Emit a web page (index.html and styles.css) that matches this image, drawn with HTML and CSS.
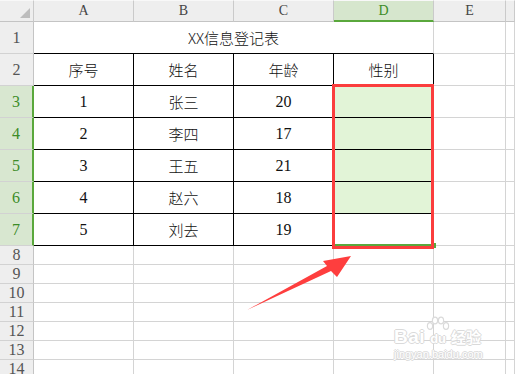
FILE: index.html
```html
<!DOCTYPE html>
<html>
<head>
<meta charset="utf-8">
<link rel="stylesheet" href="styles.css">
</head>
<body>
<div class="sheet">
  <div class="cell hd corner"><svg width="10" height="10" viewBox="0 0 10 10"><polygon points="10,0 10,10 0,10" fill="#bdbdbd"/></svg></div>
  <div class="cell hd">A</div>
  <div class="cell hd">B</div>
  <div class="cell hd">C</div>
  <div class="cell hd hd-sel">D</div>
  <div class="cell hd">E</div>
  <div class="cell hd"></div>

  <div class="cell rn">1</div>
  <div class="cell title zh">XX信息登记表</div>
  <div class="cell"></div>
  <div class="cell"></div>

  <div class="cell rn">2</div>
  <div class="cell tb zh">序号</div>
  <div class="cell tb zh">姓名</div>
  <div class="cell tb zh">年龄</div>
  <div class="cell tb zh">性别</div>
  <div class="cell"></div>
  <div class="cell"></div>

  <div class="cell rn rn-sel">3</div>
  <div class="cell tb">1</div>
  <div class="cell tb zh">张三</div>
  <div class="cell tb">20</div>
  <div class="cell tb fill"></div>
  <div class="cell"></div>
  <div class="cell"></div>

  <div class="cell rn rn-sel">4</div>
  <div class="cell tb">2</div>
  <div class="cell tb zh">李四</div>
  <div class="cell tb">17</div>
  <div class="cell tb fill"></div>
  <div class="cell"></div>
  <div class="cell"></div>

  <div class="cell rn rn-sel">5</div>
  <div class="cell tb">3</div>
  <div class="cell tb zh">王五</div>
  <div class="cell tb">21</div>
  <div class="cell tb fill"></div>
  <div class="cell"></div>
  <div class="cell"></div>

  <div class="cell rn rn-sel">6</div>
  <div class="cell tb">4</div>
  <div class="cell tb zh">赵六</div>
  <div class="cell tb">18</div>
  <div class="cell tb fill"></div>
  <div class="cell"></div>
  <div class="cell"></div>

  <div class="cell rn rn-sel">7</div>
  <div class="cell tb">5</div>
  <div class="cell tb zh">刘去</div>
  <div class="cell tb">19</div>
  <div class="cell tb active"></div>
  <div class="cell"></div>
  <div class="cell"></div>

  <div class="cell rn">8</div>
  <div class="cell"></div><div class="cell"></div><div class="cell"></div><div class="cell"></div><div class="cell"></div><div class="cell"></div>
  <div class="cell rn">9</div>
  <div class="cell"></div><div class="cell"></div><div class="cell"></div><div class="cell"></div><div class="cell"></div><div class="cell"></div>
  <div class="cell rn">10</div>
  <div class="cell"></div><div class="cell"></div><div class="cell"></div><div class="cell"></div><div class="cell"></div><div class="cell"></div>
  <div class="cell rn">11</div>
  <div class="cell"></div><div class="cell"></div><div class="cell"></div><div class="cell"></div><div class="cell"></div><div class="cell"></div>
  <div class="cell rn">12</div>
  <div class="cell"></div><div class="cell"></div><div class="cell"></div><div class="cell"></div><div class="cell"></div><div class="cell"></div>
  <div class="cell rn">13</div>
  <div class="cell"></div><div class="cell"></div><div class="cell"></div><div class="cell"></div><div class="cell"></div><div class="cell"></div>
  <div class="cell rn">14</div>
  <div class="cell"></div><div class="cell"></div><div class="cell"></div><div class="cell"></div><div class="cell"></div><div class="cell"></div>
</div>

<div class="handle"></div>
<div class="mark"></div>

<svg class="arrow" width="515" height="374" viewBox="0 0 515 374">
  <polygon points="247,310 327,266 323,261 351,256 337,277 331,271" fill="#fe3e3e"/>
</svg>

<div class="watermark">
  <div class="wm-top">
    <span class="wm-bai">Bai</span>
    <span class="wm-paw">
      <svg width="24" height="16" viewBox="0 0 24 16">
        <ellipse cx="4" cy="10" rx="2.6" ry="3.4" fill="#fff" stroke="#dadada" stroke-width="1.2"/>
        <ellipse cx="9" cy="4.5" rx="2.6" ry="3.4" fill="#fff" stroke="#dadada" stroke-width="1.2"/>
        <ellipse cx="15" cy="4.5" rx="2.6" ry="3.4" fill="#fff" stroke="#dadada" stroke-width="1.2"/>
        <ellipse cx="20" cy="10" rx="2.6" ry="3.4" fill="#fff" stroke="#dadada" stroke-width="1.2"/>
      </svg>
      <span class="wm-du">du</span>
    </span>
    <span class="wm-jy">经验</span>
  </div>
  <div class="wm-url">jingyan.baidu.com</div>
</div>
</body>
</html>
```

FILE: styles.css
```css
html, body {
  margin: 0;
  padding: 0;
}

body {
  width: 515px;
  height: 374px;
  overflow: hidden;
  background: #ffffff;
  position: relative;
  font-family: "Liberation Serif", serif;
}

.sheet {
  display: grid;
  grid-template-columns: 34px 100px 100px 100px 100px 72px 1fr;
  grid-template-rows: 22px repeat(7, 32px) repeat(7, 19px);
}

.cell {
  box-sizing: border-box;
  display: flex;
  align-items: center;
  justify-content: center;
  border-right: 1px solid #d4d4d4;
  border-bottom: 1px solid #d4d4d4;
  line-height: 1;
  font-size: 16px;
  color: #111;
}

.hd {
  background: #eeeeee;
  border-top: 1px solid #f8f8f8;
  border-right-color: #cacaca;
  border-bottom-color: #c4c4c4;
  color: #454545;
  font-size: 14px;
}

.corner {
  justify-content: flex-end;
  align-items: flex-end;
  padding: 0 3px 3px 0;
}

.corner svg {
  display: block;
}

.hd-sel {
  background: #d6e6cd;
  color: #3c8c28;
  border-bottom: 2px solid #5aa83c;
}

.rn {
  background: #eeeeee;
  color: #555555;
  border-right-color: #c4c4c4;
  border-bottom-color: #d2d2d2;
  font-size: 16px;
}

.rn-sel {
  background: #d8e7d0;
  color: #3c8c28;
  border-right: 2px solid #5aa83c;
}

.zh {
  font-family: "Noto Sans CJK SC", sans-serif;
  font-size: 15px;
  font-weight: 300;
}

.title {
  grid-column: span 4;
  border-bottom-color: #000;
}

.tb {
  border-right-color: #000;
  border-bottom-color: #000;
}

.fill {
  background: #e2f4d7;
}

.active {
  border-bottom: 2px solid #5aa83c;
}

.handle {
  position: absolute;
  left: 432px;
  top: 243px;
  width: 4px;
  height: 5px;
  background: #5aa83c;
}

.mark {
  position: absolute;
  left: 332px;
  top: 84px;
  width: 102px;
  height: 165px;
  box-sizing: border-box;
  border: 3px solid #fb3d3d;
}

.arrow {
  position: absolute;
  left: 0;
  top: 0;
  pointer-events: none;
}

.watermark {
  position: absolute;
  left: 394px;
  top: 316px;
  display: flex;
  flex-direction: column;
  align-items: flex-start;
  color: #ffffff;
  font-family: "Liberation Sans", sans-serif;
}

.wm-top {
  display: flex;
  align-items: flex-end;
}

.wm-bai,
.wm-du,
.wm-jy,
.wm-url {
  color: #ffffff;
  text-shadow: -1px 0 0 #dadada, 1px 0 0 #dadada, 0 -1px 0 #dadada, 0 1px 0 #dadada;
}

.wm-bai {
  font-size: 19px;
  font-weight: bold;
  line-height: 16px;
  letter-spacing: 0.5px;
}

.wm-paw {
  display: flex;
  flex-direction: column;
  align-items: center;
  margin: 0 1px;
}

.wm-paw svg {
  display: block;
}

.wm-du {
  font-size: 13px;
  font-weight: bold;
  line-height: 13px;
}

.wm-jy {
  font-family: "Noto Sans CJK SC", sans-serif;
  font-size: 15px;
  line-height: 16px;
  font-weight: bold;
}

.wm-url {
  margin-top: 3px;
  font-size: 11px;
  line-height: 12px;
}
```
